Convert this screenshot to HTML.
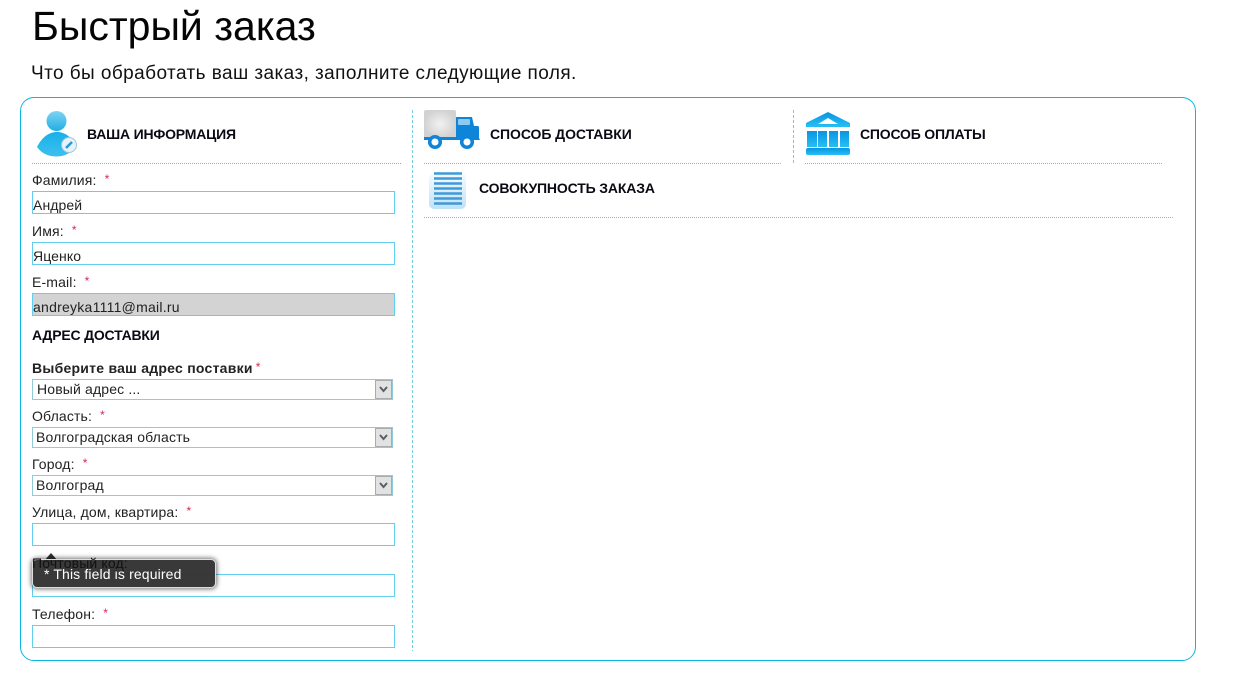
<!DOCTYPE html>
<html lang="ru"><head><meta charset="utf-8"><title>Быстрый заказ</title>
<style>
html,body{margin:0;padding:0;background:#fff}
body{width:1237px;height:690px;position:relative;overflow:hidden;font-family:"Liberation Sans",sans-serif;color:#111}
.a{position:absolute;white-space:nowrap}
.l{position:absolute;left:32px;font-size:14px;line-height:16px;white-space:nowrap;color:#222;letter-spacing:.15px}
.l i{font-style:normal;color:#d8274f;font-size:12px;margin-left:4px;position:relative;top:-2px}
.h{position:absolute;font-size:14px;letter-spacing:-.2px;font-weight:bold;line-height:16px;white-space:nowrap;color:#0a0a14}
.f{position:absolute;left:32px;width:361px;height:21px;border:1px solid #62cfee;background:#fff;font-size:14px;line-height:26px;color:#222;overflow:hidden;letter-spacing:.1px}
.s{position:absolute;left:32px;width:359px;height:19px;border:1px solid #8fcbd8;background:#fff;font-size:14px;line-height:19px;color:#222;letter-spacing:.15px}
.s span{position:absolute;left:3px;top:0;white-space:nowrap}
.s svg{position:absolute;right:0;top:0}
.dh{position:absolute;height:1px;background:repeating-linear-gradient(90deg,#4fcbe6 0 1px,#fff 1px 2px)}
.dv{position:absolute;width:1px;background:repeating-linear-gradient(180deg,#6fd0e0 0 3px,#fff 3px 5px)}
</style></head><body>
<div class="a" style="left:32px;top:3px;font-size:41px;line-height:46px;color:#050505">Быстрый заказ</div>
<div class="a" style="left:31px;top:63px;font-size:19px;line-height:21px;color:#111;letter-spacing:.43px">Что бы обработать ваш заказ, заполните следующие поля.</div>
<div class="a" style="left:20px;top:97px;width:1174px;height:562px;border:1px solid #0cb6e2;border-radius:14px"></div>

<div class="dv" style="left:412px;top:110px;height:541px"></div>
<div class="dv" style="left:793px;top:110px;height:54px"></div>
<div class="dh" style="left:32px;top:163px;width:369px"></div>
<div class="dh" style="left:424px;top:163px;width:357px"></div>
<div class="dh" style="left:805px;top:163px;width:357px"></div>
<div class="dh" style="left:424px;top:217px;width:749px"></div>

<svg class="a" style="left:34px;top:109px" width="46" height="48" viewBox="0 0 46 48">
<defs><linearGradient id="g1" x1="0" y1="0" x2="0" y2="1"><stop offset="0" stop-color="#7fd4f2"/><stop offset="1" stop-color="#22aee4"/></linearGradient>
<linearGradient id="g2" x1="0" y1="0" x2="0" y2="1"><stop offset="0" stop-color="#19b0e8"/><stop offset="1" stop-color="#3cc0ee"/></linearGradient></defs>
<circle cx="22.500" cy="12" r="10" fill="url(#g1)"/>
<path d="M3 38C8 28 15 23 23 23C31 23 38 28 42 38C36 45 29 47.500 23 47.500C15 47.500 8 45 3 38Z" fill="url(#g2)"/>
<circle cx="35" cy="36" r="7.500" fill="#e6f3f8" stroke="#9fc4d4"/>
<path d="M32 39L38 33" stroke="#2a9bd6" stroke-width="2.600"/>
</svg>
<div class="h" style="left:87px;top:126px">ВАША ИНФОРМАЦИЯ</div>

<svg class="a" style="left:424px;top:109px" width="56" height="42" viewBox="0 0 56 42">
<defs><radialGradient id="g3"><stop offset="0" stop-color="#f2f2f2"/><stop offset="1" stop-color="#d2d2d2"/></radialGradient></defs>
<path d="M0 3Q0 1 2 1H30Q32 1 32 3V29H0Z" fill="url(#g3)"/>
<path d="M0 28H32V8H48L50 17H54Q55 17 55 19V29L56 31H0Z" fill="#0e85d8"/>
<rect x="34" y="10" width="12" height="6" rx="1" fill="#8ccaf0"/>
<circle cx="11" cy="33" r="5.300" fill="#fff" stroke="#0e85d8" stroke-width="3.500"/>
<circle cx="43" cy="33" r="5.300" fill="#fff" stroke="#0e85d8" stroke-width="3.500"/>
</svg>
<div class="h" style="left:490px;top:126px;letter-spacing:-.07px">СПОСОБ ДОСТАВКИ</div>

<svg class="a" style="left:805px;top:111px" width="48" height="45" viewBox="0 0 48 45">
<defs><linearGradient id="g4" x1="0" y1="0" x2="0" y2="1"><stop offset="0" stop-color="#0a94e2"/><stop offset="1" stop-color="#26c0f4"/></linearGradient></defs>
<path d="M23 1L45 12V16H1V12Z" fill="url(#g4)"/>
<path d="M23 7L33 13H13Z" fill="#fff"/>
<rect x="2" y="20" width="10" height="16" fill="url(#g4)"/>
<rect x="13" y="20" width="9" height="16" fill="url(#g4)"/>
<rect x="24" y="20" width="9" height="16" fill="url(#g4)"/>
<rect x="35" y="20" width="9" height="16" fill="url(#g4)"/>
<rect x="1" y="37" width="44" height="7" rx="2" fill="url(#g4)"/>
</svg>
<div class="h" style="left:860px;top:126px">СПОСОБ ОПЛАТЫ</div>

<svg class="a" style="left:429px;top:170px" width="38" height="40" viewBox="0 0 38 40">
<defs><linearGradient id="g5" x1="0" y1="0" x2="0" y2="1"><stop offset="0" stop-color="#f6fbfe"/><stop offset="1" stop-color="#bfe2f7"/></linearGradient></defs>
<rect x="0" y="3" width="37" height="36" rx="5" fill="url(#g5)"/>
<g stroke="#3f9ad8" stroke-width="2.400"><path d="M5 3.500H33M5 8.500H33M5 13.500H33M5 18.500H33M5 23.500H33M5 28.500H33M5 33.500H33"/></g>
</svg>
<div class="h" style="left:479px;top:180px;letter-spacing:-.15px">СОВОКУПНОСТЬ ЗАКАЗА</div>

<div class="l" style="top:172px">Фамилия: <i>*</i></div>
<div class="f" style="top:191px">Андрей</div>
<div class="l" style="top:223px">Имя: <i>*</i></div>
<div class="f" style="top:242px">Яценко</div>
<div class="l" style="top:274px">E-mail: <i>*</i></div>
<div class="f" style="top:293px;background:#d3d3d3;letter-spacing:.25px">andreyka1111@mail.ru</div>
<div class="h" style="left:32px;top:327px">АДРЕС ДОСТАВКИ</div>
<div class="l" style="top:360px;font-weight:bold;letter-spacing:.25px">Выберите ваш адрес поставки<i style="margin-left:3px;font-weight:normal">*</i></div>

<div class="s" style="top:379px"><span style="left:4px">Новый адрес ...</span><svg width="17" height="19"><rect x=".5" y=".5" width="16" height="18" fill="#e2e2e2" stroke="#ababab"/><path d="M5 7L8.500 11L12 7" fill="none" stroke="#55606a" stroke-width="2"/></svg></div>
<div class="l" style="top:408px">Область: <i>*</i></div>
<div class="s" style="top:427px"><span>Волгоградская область</span><svg width="17" height="19"><rect x=".5" y=".5" width="16" height="18" fill="#e2e2e2" stroke="#ababab"/><path d="M5 7L8.500 11L12 7" fill="none" stroke="#55606a" stroke-width="2"/></svg></div>
<div class="l" style="top:456px">Город: <i>*</i></div>
<div class="s" style="top:475px"><span>Волгоград</span><svg width="17" height="19"><rect x=".5" y=".5" width="16" height="18" fill="#e2e2e2" stroke="#ababab"/><path d="M5 7L8.500 11L12 7" fill="none" stroke="#55606a" stroke-width="2"/></svg></div>
<div class="l" style="top:504px">Улица, дом, квартира: <i>*</i></div>
<div class="f" style="top:523px"></div>
<div class="f" style="top:574px"></div>
<svg class="a" style="left:43px;top:552px" width="18" height="10"><path d="M0 10L8 1L16 10Z" fill="#333"/></svg>
<div class="a" style="left:32px;top:559px;width:182px;height:27px;background:rgba(51,51,51,.97);border:1px solid #ddd;border-radius:5px;box-shadow:0 0 5px 1px rgba(0,0,0,.55);color:#fff;font-size:14px;line-height:29px;text-indent:11px;letter-spacing:.13px">* This field is required</div>
<div class="l" style="top:555px;color:#111">Почтовый код:</div>
<div class="l" style="top:606px">Телефон: <i>*</i></div>
<div class="f" style="top:625px"></div>
</body></html>
